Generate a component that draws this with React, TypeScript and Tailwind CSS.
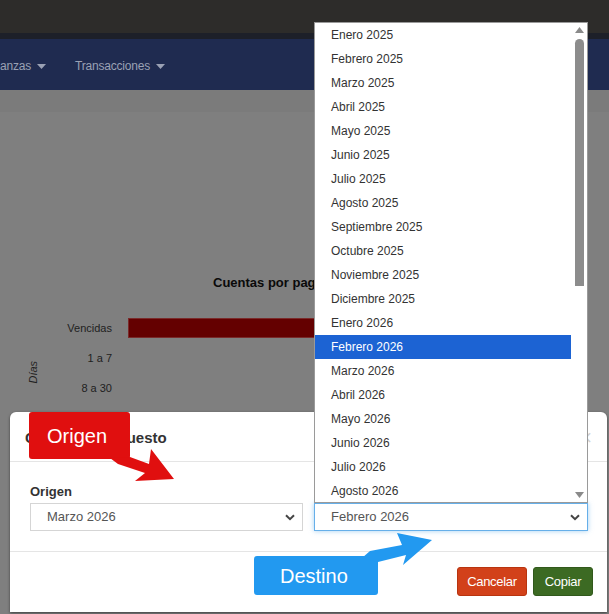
import React from 'react';

const meses = [
  'Enero 2025', 'Febrero 2025', 'Marzo 2025', 'Abril 2025', 'Mayo 2025', 'Junio 2025',
  'Julio 2025', 'Agosto 2025', 'Septiembre 2025', 'Octubre 2025', 'Noviembre 2025', 'Diciembre 2025',
  'Enero 2026', 'Febrero 2026', 'Marzo 2026', 'Abril 2026', 'Mayo 2026', 'Junio 2026',
  'Julio 2026', 'Agosto 2026',
];

const sans = { fontFamily: '"Liberation Sans", Arial, sans-serif' };

function Caret() {
  return (
    <svg width="9" height="5" viewBox="0 0 9 5" className="ml-[6px] mt-[1px]">
      <path d="M0 0 L9 0 L4.5 5 Z" fill="currentColor" />
    </svg>
  );
}

function Chevron() {
  return (
    <svg width="10" height="7" viewBox="0 0 10 7">
      <path d="M1 1.2 L5 5.2 L9 1.2" fill="none" stroke="#444" strokeWidth="2" />
    </svg>
  );
}

export default function App() {
  return (
    <div
      className="relative w-[609px] h-[614px] overflow-hidden bg-[#7f7f7f] font-['Liberation_Sans',Arial,sans-serif]"
    >
      {/* top bar */}
      <div className="h-[33px] bg-[#2d2c2a]" />
      <div className="h-[6px] bg-[#1d2029]" />
      <nav className="h-[51px] pt-[3px] bg-[#1f2b50] flex items-center text-[12px] tracking-[-0.2px] text-[#9aa1b4]">
        <span className="flex items-center">anzas<Caret /></span>
        <span className="flex items-center ml-[29px]">Transacciones<Caret /></span>
      </nav>
      <div className="h-[22px] bg-[#7b7b7b]" />

      {/* chart behind overlay */}
      <div className="pt-[163px]">
        <div className="pl-[213px] text-[13px] font-bold text-[#0a0a0a] leading-[16px] whitespace-nowrap">
          Cuentas por pagar
        </div>
        <div className="flex mt-[22px]">
          <div className="w-[20px] ml-[23px] flex items-center justify-center pt-[28px]">
            <span className="-rotate-90 italic text-[11px] text-[#222] whitespace-nowrap">Días</span>
          </div>
          <div className="w-[69px] text-right text-[11px] text-[#1e1e1e]">
            <div className="h-[30px] leading-[30px]">Vencidas</div>
            <div className="h-[30px] leading-[30px]">1 a 7</div>
            <div className="h-[30px] leading-[30px]">8 a 30</div>
          </div>
          <div className="ml-[16px] flex-1">
            <div className="h-[30px] flex items-center">
              <div className="h-[20px] w-[200px] bg-[#640000] border border-[#7a2a2a]" />
            </div>
          </div>
        </div>
      </div>

      {/* modal */}
      <div className="absolute left-[10px] top-[412px] w-[597px] h-[200px] bg-white rounded-t-[6px] shadow-[0_1px_3px_rgba(0,0,0,0.5)]">
        <div className="h-[50px] pt-[3px] border-b border-[#e5e5e5] flex items-center justify-between pl-[15px] pr-[15px]">
          <span className="text-[15px] font-bold text-[#333]">Copiar presupuesto</span>
          <span className="text-[22px] leading-none text-[#d2d2d2]">×</span>
        </div>
        <div className="px-[20px] pt-[22px] pb-[20px] border-b border-[#e5e5e5] grid grid-cols-[273px_274px] gap-x-[11px]">
          <div>
            <div className="text-[13px] font-bold text-[#333] leading-[16px] mb-[3px]">Origen</div>
            <div className="h-[28px] border border-[#d5d5d5] flex items-center justify-between pl-[16px] pr-[7px] text-[13px] text-[#555]">
              Marzo 2026
              <Chevron />
            </div>
          </div>
          <div>
            <div className="text-[13px] font-bold text-[#333] leading-[16px] mb-[3px]">Destino</div>
            <div className="h-[28px] border border-[#66afe9] shadow-[0_0_5px_rgba(102,175,233,0.6)] flex items-center justify-between pl-[16px] pr-[7px] text-[13px] text-[#555]">
              Febrero 2026
              <Chevron />
            </div>
          </div>
        </div>
        <div className="flex justify-end gap-[6px] pt-[15px] pr-[14px]">
          <button className="h-[29px] w-[70px] rounded-[3px] bg-[#d2411a] text-white text-[13px] tracking-[-0.3px] border border-[#b8340f]">
            Cancelar
          </button>
          <button className="h-[29px] w-[60px] rounded-[3px] bg-[#3c6a23] text-white text-[13px] tracking-[-0.3px] border border-[#31591c]">
            Copiar
          </button>
        </div>
      </div>

      {/* open select list */}
      <div className="absolute left-[314px] top-[22px] w-[274px] h-[481px] bg-white border border-[#9a9a9a] flex" style={sans}>
        <ul className="flex-1">
          {meses.map((m) => (
            <li
              key={m}
              className={`h-[24px] leading-[24px] pl-[16px] text-[12px] ${
                m === 'Febrero 2026' ? 'bg-[#1c63d3] text-white' : 'text-[#333]'
              }`}
            >
              {m}
            </li>
          ))}
        </ul>
        <div className="w-[16px] flex flex-col items-center pt-[4px] pb-[4px]">
          <svg width="9" height="6" viewBox="0 0 9 6"><path d="M0 6 L4.5 0 L9 6 Z" fill="#8a8a8a" /></svg>
          <div className="mt-[6px] w-[9px] h-[247px] rounded-t-full rounded-b-[2px] bg-[#8c8c8c]" />
          <div className="flex-1" />
          <svg width="9" height="6" viewBox="0 0 9 6"><path d="M0 0 L9 0 L4.5 6 Z" fill="#8a8a8a" /></svg>
        </div>
      </div>

      {/* annotations */}
      <div className="absolute left-[29px] top-[412px] w-[101px] h-[47px] bg-[#e00f0f] rounded-[3px] flex items-center pl-[18px] text-white text-[20px]" style={sans}>
        Origen
      </div>
      <div className="absolute left-[254px] top-[556px] w-[124px] h-[39px] bg-[#2299f0] rounded-[3px] flex items-center pl-[26px] text-white text-[20px]" style={sans}>
        Destino
      </div>
      <svg className="absolute inset-0 pointer-events-none" width="609" height="614" viewBox="0 0 609 614">
        <path d="M110 458 L130 457 L149 464 L151 449 L174 479 L135 481 L145 473 L118 464 Z" fill="#e00f0f" strokeLinejoin="round" />
        <path d="M362 558 L370 551 L402 545 L397 533 L432 540 L403 565 L406 555 L378 562 Z" fill="#2299f0" strokeLinejoin="round" />
      </svg>
    </div>
  );
}
